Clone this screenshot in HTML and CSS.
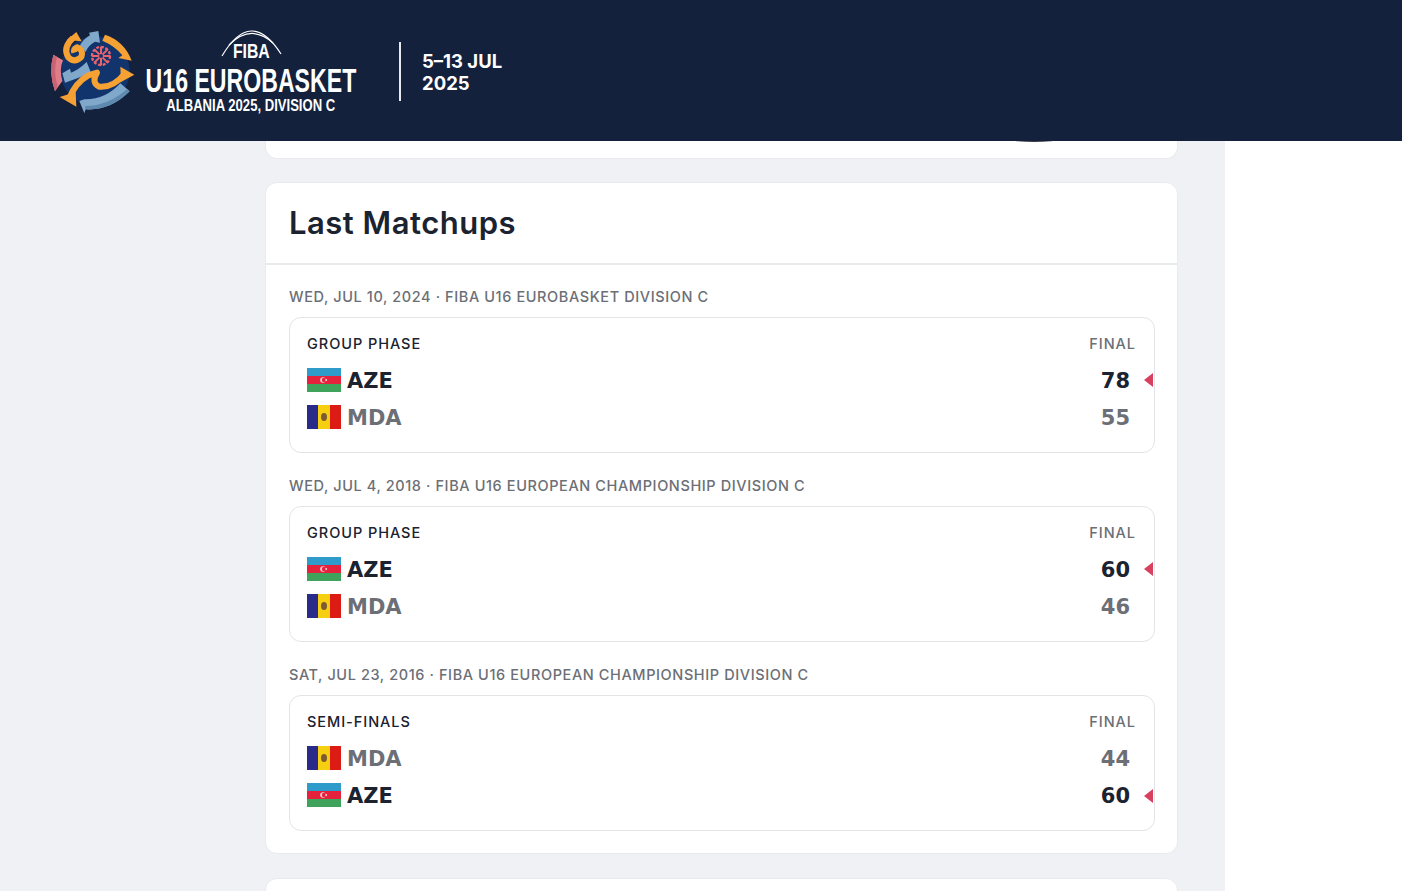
FILE: index.html
```html
<!DOCTYPE html>
<html>
<head>
    <meta charset="UTF-8">
    <title>AZE vs MDA - FIBA U16 EuroBasket</title>
    <link rel="stylesheet" href="styles.css">
</head>
<body>
    <svg class="defs" width="0" height="0">
        <symbol id="flag-aze" viewBox="0 0 34 24">
            <rect width="34" height="8" fill="#2f9bcb"/>
            <rect y="8" width="34" height="8" fill="#e6213c"/>
            <rect y="16" width="34" height="8" fill="#3fa35c"/>
            <circle cx="16" cy="12" r="2.8" fill="#f7d5d8"/>
            <circle cx="17" cy="12" r="2.2" fill="#e6213c"/>
            <circle cx="19.2" cy="12" r="1" fill="#f7d5d8"/>
        </symbol>
        <symbol id="flag-mda" viewBox="0 0 34 24">
            <rect width="11" height="24" fill="#2a2b88"/>
            <rect x="11" width="12" height="24" fill="#f6cf10"/>
            <rect x="23" width="11" height="24" fill="#dc1c14"/>
            <ellipse cx="17" cy="12" rx="3" ry="4" fill="#7d5a34"/>
        </symbol>
    </svg>

    <header class="topbar">
        <svg class="mark" viewBox="0 0 285 270" width="95" height="90">
            <circle cx="150" cy="135" r="104" fill="#12346c"/>
            <!-- wheel -->
            <g fill="none" stroke="#ea6470">
                <circle cx="168" cy="90" r="27" stroke-width="7" stroke-dasharray="9 5"/>
                <path d="M168 62V118M140 90H196M148 70L188 110M188 70L148 110" stroke-width="6"/>
            </g>
            <circle cx="168" cy="90" r="6" fill="#12346c"/>
            <!-- blue pieces -->
            <path d="M160 15L165 50L150 47Q130 57 122 78L104 60Q116 38 135 28L132 20Z" fill="#7fa8cb"/>
            <path d="M52 142L60 170Q100 156 138 140L125 108Q100 132 78 140L75 128Z" fill="#7fa8cb"/>
            <path d="M103 225L118 262L122 250Q195 255 254 196L226 172Q180 222 118 220Z" fill="#7fa8cb"/>
            <path d="M122 250Q195 255 254 196L246 189Q190 240 120 240Z" fill="#5f8ab0"/>
            <!-- pink piece -->
            <path d="M25 86L54 103Q42 130 52 165L30 196Q10 140 25 86Z" fill="#e17d88"/>
            <path d="M25 86L36 92Q24 140 38 180L30 196Q10 140 25 86Z" fill="#c96474"/>
            <!-- orange pieces -->
            <path d="M172 44L180 26Q238 45 260 104L220 96L232 88Q210 60 172 44Z" fill="#f6a134"/>
            <g fill="none" stroke="#f6a134" stroke-width="18" stroke-linejoin="round">
                <path d="M84 36Q52 65 70 94Q88 112 108 94Q118 74 96 64Q84 68 88 80"/>
                <path d="M74 214Q92 170 130 148L156 140Q138 170 162 182Q205 186 238 144"/>
            </g>
            <path d="M94 18L110 46L66 42Z" fill="#f6a134"/>
            <path d="M44 213L94 242L92 198Z" fill="#f6a134"/>
            <path d="M226 122L268 146L228 168Z" fill="#f6a134"/>
        </svg>
        <div class="wordmark">
            <svg class="arcs" viewBox="0 0 62 30" width="62" height="30">
                <path d="M1 27Q30 -22 60 25" fill="none" stroke="#fff" stroke-width="1.2"/>
                <path d="M8 16Q30 -6 52 14" fill="none" stroke="#fff" stroke-width="1.2"/>
            </svg>
            <div class="word-fiba">FIBA</div>
            <div class="word-title">U16 EUROBASKET</div>
            <div class="word-sub">ALBANIA 2025, DIVISION C</div>
        </div>
        <div class="divider"></div>
        <div class="dates">5–13 JUL<br>2025</div>
    </header>

    <main class="page">
        <div class="card card-stub"><span class="stub-shadow"></span></div>

        <section class="card">
            <h2 class="card-title">Last Matchups</h2>
            <div class="matchups">
                <div class="matchup">
                    <div class="matchup-date">WED, JUL 10, 2024 · FIBA U16 EUROBASKET DIVISION C</div>
                    <div class="game">
                        <div class="game-head"><span class="phase">GROUP PHASE</span><span class="status">FINAL</span></div>
                        <div class="team win">
                            <svg class="flag"><use href="#flag-aze"/></svg>
                            <span class="code">AZE</span><span class="score">78</span><i class="arrow"></i>
                        </div>
                        <div class="team">
                            <svg class="flag"><use href="#flag-mda"/></svg>
                            <span class="code">MDA</span><span class="score">55</span>
                        </div>
                    </div>
                </div>
                <div class="matchup">
                    <div class="matchup-date">WED, JUL 4, 2018 · FIBA U16 EUROPEAN CHAMPIONSHIP DIVISION C</div>
                    <div class="game">
                        <div class="game-head"><span class="phase">GROUP PHASE</span><span class="status">FINAL</span></div>
                        <div class="team win">
                            <svg class="flag"><use href="#flag-aze"/></svg>
                            <span class="code">AZE</span><span class="score">60</span><i class="arrow"></i>
                        </div>
                        <div class="team">
                            <svg class="flag"><use href="#flag-mda"/></svg>
                            <span class="code">MDA</span><span class="score">46</span>
                        </div>
                    </div>
                </div>
                <div class="matchup">
                    <div class="matchup-date">SAT, JUL 23, 2016 · FIBA U16 EUROPEAN CHAMPIONSHIP DIVISION C</div>
                    <div class="game">
                        <div class="game-head"><span class="phase">SEMI-FINALS</span><span class="status">FINAL</span></div>
                        <div class="team">
                            <svg class="flag"><use href="#flag-mda"/></svg>
                            <span class="code">MDA</span><span class="score">44</span>
                        </div>
                        <div class="team win">
                            <svg class="flag"><use href="#flag-aze"/></svg>
                            <span class="code">AZE</span><span class="score">60</span><i class="arrow"></i>
                        </div>
                    </div>
                </div>
            </div>
        </section>

        <div class="card card-next"></div>
    </main>
</body>
</html>
```

FILE: styles.css
```css
* {
    margin: 0;
    padding: 0;
    box-sizing: border-box;
}

html, body {
    height: 100%;
    overflow: hidden;
}

body {
    background: #fff;
    font-family: Inter, 'Liberation Sans', sans-serif;
    color: #1b2230;
}

.defs {
    display: block;
    height: 0;
}

/* top bar */
.topbar {
    height: 141px;
    background: #13213d;
    display: flex;
    align-items: center;
    padding-left: 45px;
    color: #fff;
}

.mark {
    flex: none;
}

.wordmark {
    position: relative;
    display: flex;
    flex-direction: column;
    align-items: center;
    width: 210px;
    margin-left: 6px;
    margin-top: 13px;
    font-family: 'Liberation Sans', sans-serif;
    font-weight: 700;
    white-space: nowrap;
}

.arcs {
    position: absolute;
    left: 75px;
    top: -12px;
}

.word-fiba {
    font-size: 20px;
    line-height: 20px;
    transform: scaleX(0.79);
}

.word-title {
    margin-top: 1px;
    font-size: 34px;
    line-height: 36px;
    transform: scaleX(0.68);
}

.word-sub {
    font-size: 17px;
    line-height: 15px;
    transform: scaleX(0.77);
}

.divider {
    width: 2px;
    height: 59px;
    background: #e8e9ee;
    margin-left: 43px;
    margin-top: 1px;
}

.dates {
    margin-left: 21px;
    margin-top: 3px;
    font-size: 18.5px;
    font-weight: 700;
    line-height: 22px;
}

/* page column */
.page {
    width: 1225px;
    height: 750px;
    padding-left: 265px;
    padding-right: 47px;
    background: #f0f1f5;
    overflow: hidden;
}

.card {
    background: #fff;
    border: 1px solid #e9eaee;
    border-radius: 12px;
    margin-bottom: 24px;
}

.card-stub {
    position: relative;
    height: 18px;
    margin-bottom: 23px;
    border-top: 0;
    border-radius: 0 0 12px 12px;
    overflow: hidden;
}

.stub-shadow {
    position: absolute;
    left: 745px;
    top: -4px;
    width: 46px;
    height: 5px;
    border-radius: 50%;
    background: #3a3a40;
}

.card-next {
    height: 60px;
}

.card-title {
    height: 82px;
    padding: 22px 23px 0;
    font-size: 31px;
    font-weight: 600;
    line-height: 36px;
    letter-spacing: 0.5px;
    border-bottom: 2px solid #e9eaee;
}

.matchups {
    padding: 22px 22px 22px 23px;
}

.matchup + .matchup {
    margin-top: 23px;
}

.matchup-date {
    height: 30px;
    padding-top: 1px;
    font-size: 14.5px;
    font-weight: 500;
    line-height: 18px;
    color: #6c6f76;
    letter-spacing: 0.6px;
}

/* single game */
.game {
    height: 136px;
    padding: 17px 18px 0 17px;
    border: 1px solid #e3e4e8;
    border-radius: 12px;
}

.game-head {
    display: flex;
    justify-content: space-between;
    font-size: 14.5px;
    font-weight: 500;
    line-height: 18px;
    margin-bottom: 8px;
    letter-spacing: 0.95px;
}

.status {
    color: #6c6f76;
}

.team {
    position: relative;
    display: flex;
    align-items: center;
    height: 37.5px;
    color: #6c6f76;
    font-family: 'DejaVu Sans', sans-serif;
    font-size: 21px;
    font-weight: 700;
}

.team.win {
    color: #1b2230;
}

.flag {
    width: 34px;
    height: 24px;
    margin-right: 6px;
}

.code {
    flex: 1;
    padding-top: 2px;
}

.score {
    margin-right: 6px;
    padding-top: 2px;
}

.arrow {
    position: absolute;
    right: -17px;
    top: 12px;
    border-style: solid;
    border-width: 7px 9px 7px 0;
    border-color: transparent #d7405f transparent transparent;
}
```
